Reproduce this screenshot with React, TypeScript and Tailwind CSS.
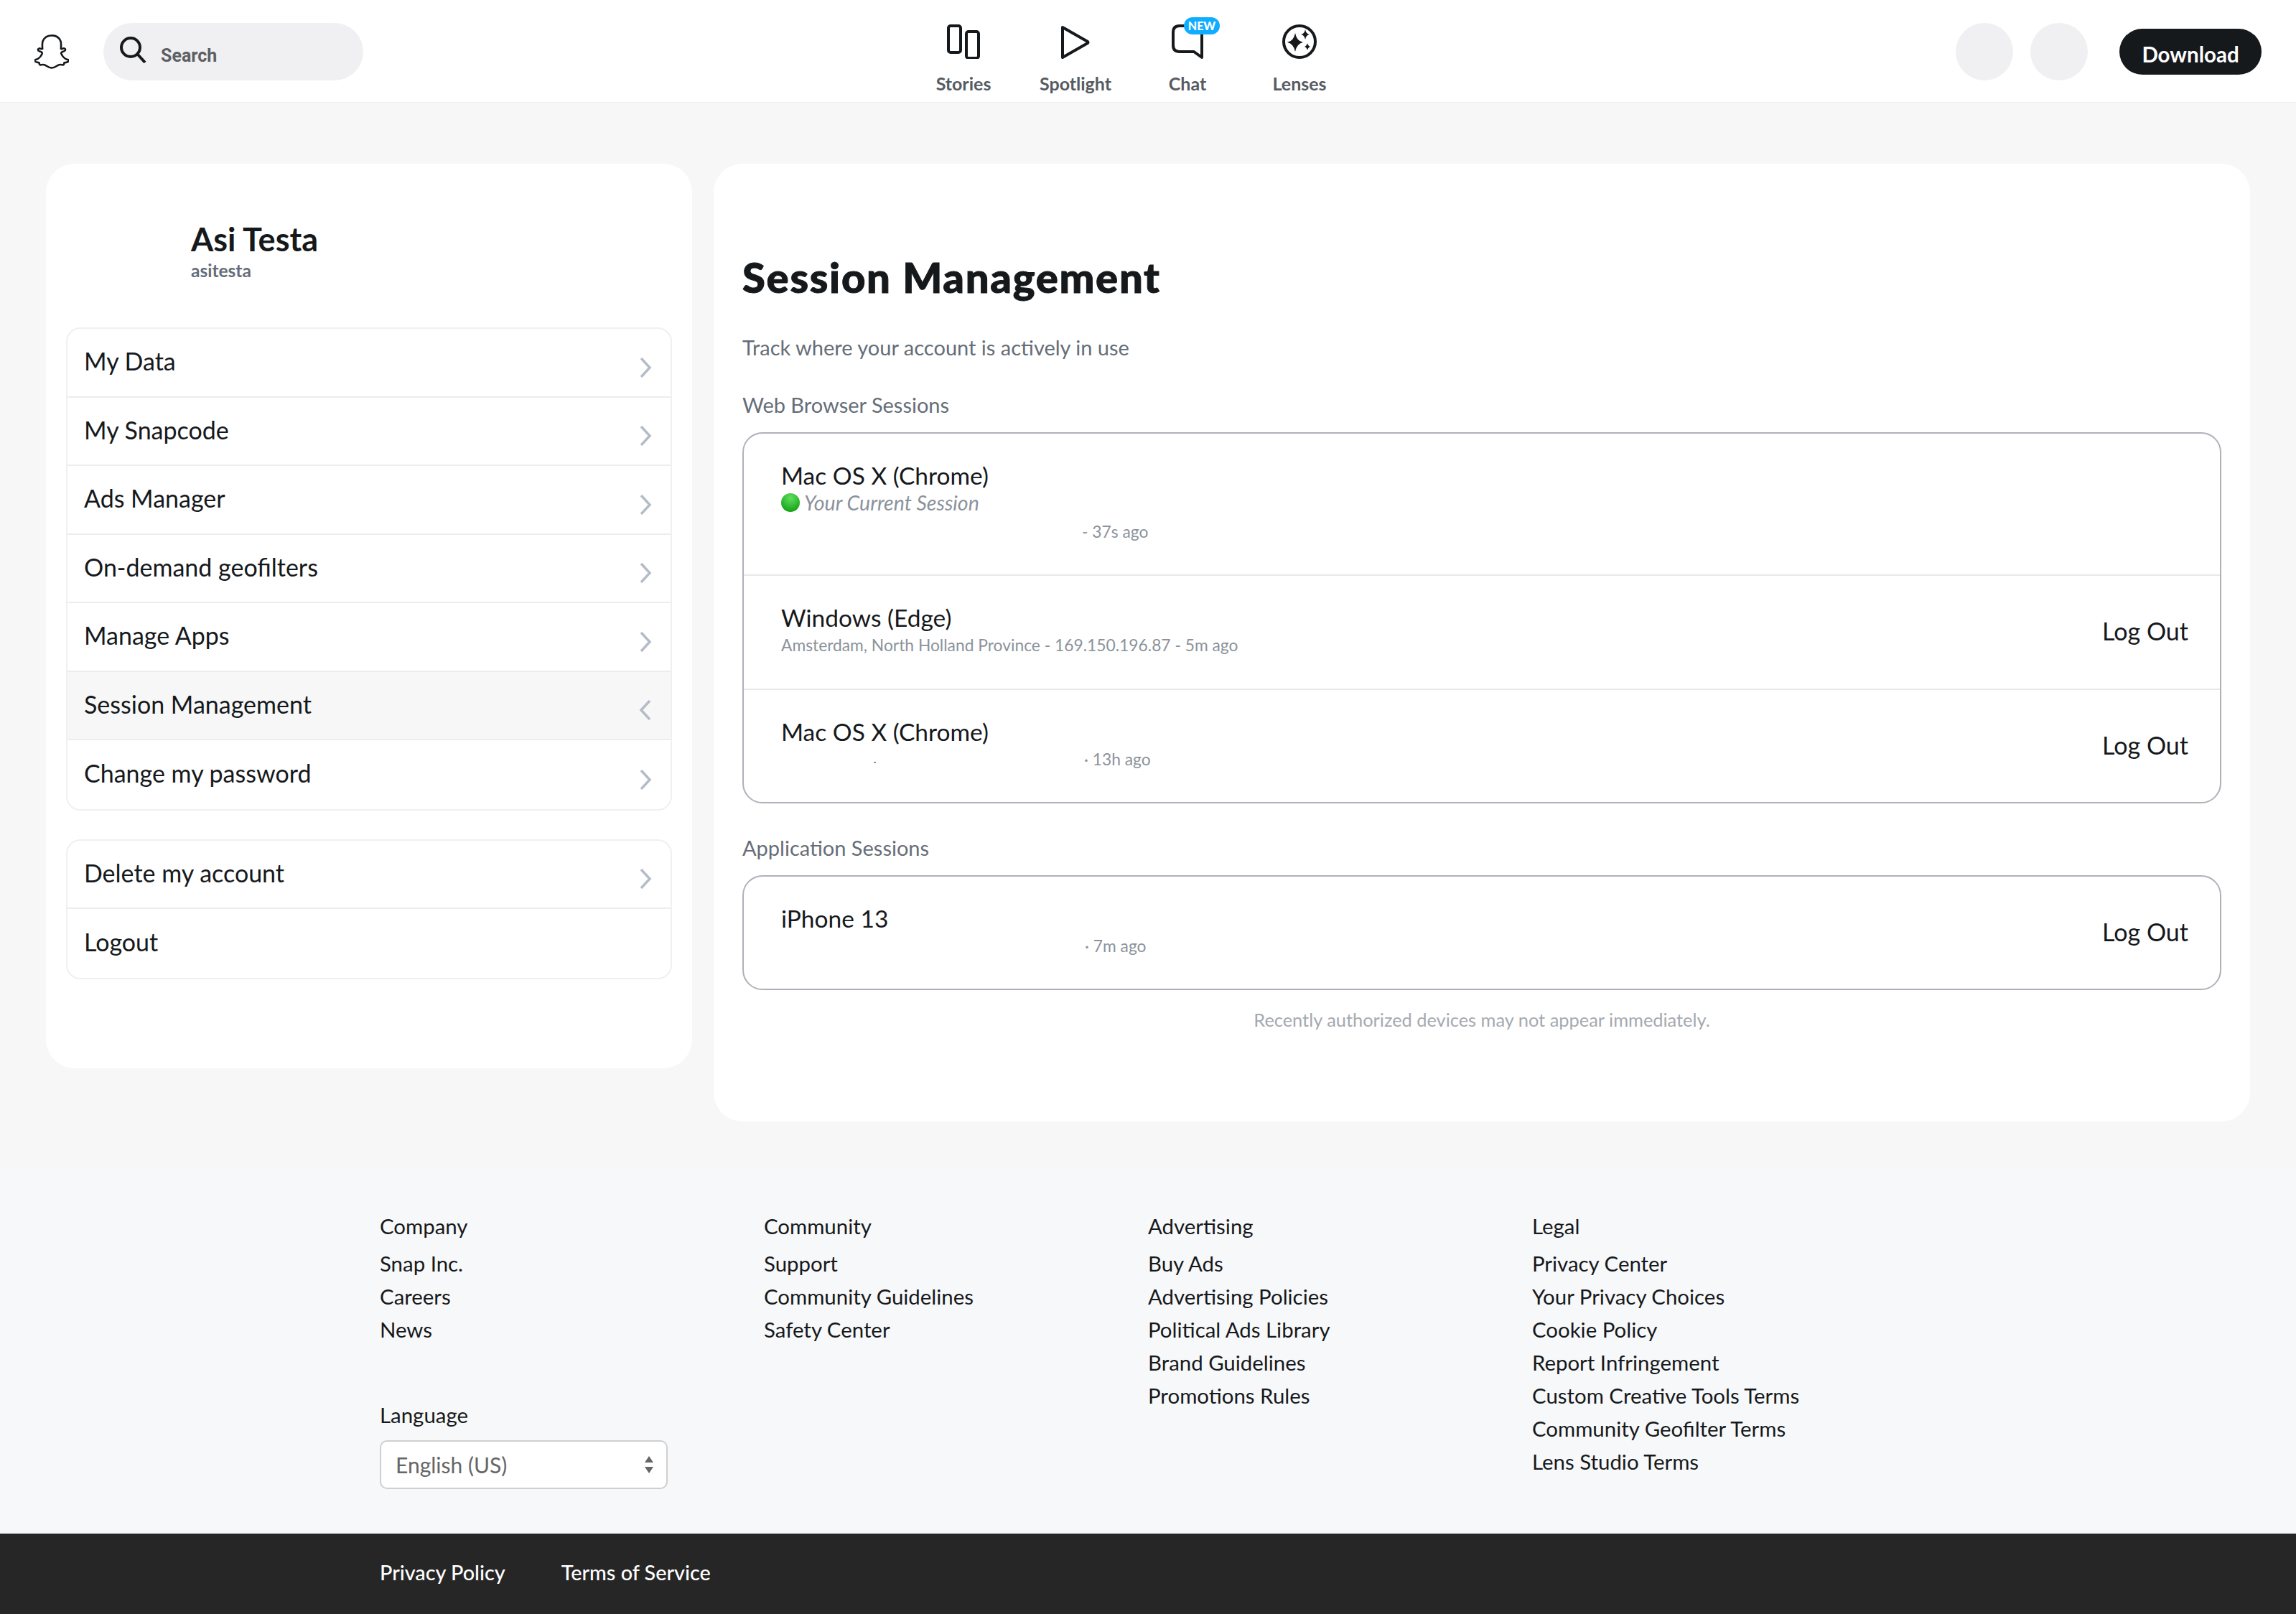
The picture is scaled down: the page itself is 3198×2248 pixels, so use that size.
import { FaSnapchatGhost } from "react-icons/fa";

const FONT = "font-['Lato','Noto_Sans',sans-serif]";

const Chevron = ({ open = false }: { open?: boolean }) => (
  <svg width="18" height="28" viewBox="0 0 18 28" className="mt-[14px]" fill="none" stroke="#b4bcc7" strokeWidth="3.5">
    {open ? <path d="M15 1 L3 14 L15 27" /> : <path d="M3 1 L15 14 L3 27" />}
  </svg>
);

const NavItem = ({ label, children }: { label: string; children: React.ReactNode }) => (
  <div className="relative flex w-[156px] flex-col items-center">
    <div className="flex h-[73px] w-[60px] items-start justify-center pt-[6px]">{children}</div>
    <span className="text-[25px] leading-[30px] font-bold text-[#565b62]">{label}</span>
  </div>
);

const Header = () => (
  <header className="flex h-[143px] items-center border-b border-[#efefef] bg-white pt-[2px]">
    <div className="flex w-[1264px] items-center">
      <FaSnapchatGhost className="ml-[48px] h-[48px] w-[48px] text-white" stroke="#16191c" strokeWidth="28" />
      <div className="ml-[48px] flex h-[80px] w-[362px] items-center rounded-full bg-[#f0f0f2] pl-[22px]">
        <svg width="38" height="38" viewBox="0 0 38 38" fill="none" stroke="#16191c" strokeWidth="4" className="-mt-[6px]">
          <circle cx="16" cy="16" r="13" />
          <path d="M26 26 L36 37" />
        </svg>
        <span className="mt-[12px] ml-[20px] font-['Roboto',sans-serif] text-[25px] font-bold text-[#5d5f64]">Search</span>
      </div>
    </div>
    <nav className="flex w-[624px] self-start pt-[26px]">
      <NavItem label="Stories">
        <svg width="48" height="48" viewBox="0 0 48 48" fill="none" stroke="#16191c" strokeWidth="4">
          <rect x="3" y="2" width="17" height="37" rx="3" />
          <rect x="28" y="10" width="17" height="37" rx="3" />
        </svg>
      </NavItem>
      <NavItem label="Spotlight">
        <svg width="42" height="48" viewBox="0 0 42 48" fill="none" stroke="#16191c" strokeWidth="4" strokeLinejoin="round">
          <path d="M3 4 L38 24 Q39 25 38 26 L3 46 Z" />
        </svg>
      </NavItem>
      <NavItem label="Chat">
        <svg width="46" height="48" viewBox="0 0 46 48" fill="none" stroke="#16191c" strokeWidth="4" strokeLinejoin="round">
          <path d="M12 2 H43 V46 L32 38 H12 Q3 38 3 29 V11 Q3 2 12 2 Z" />
        </svg>
        <span className="absolute top-[-4px] left-[73px] flex h-[24px] w-[50px] items-center justify-center rounded-full bg-[#0fadff] text-[16px] leading-none font-black text-white">
          NEW
        </span>
      </NavItem>
      <NavItem label="Lenses">
        <svg width="48" height="48" viewBox="0 0 48 48" fill="none">
          <circle cx="24" cy="24" r="22" stroke="#16191c" strokeWidth="4" />
          <path d="M18 12 Q20 23 29 25 Q20 27 18 38 Q16 27 7 25 Q16 23 18 12 Z" fill="#16191c" />
          <path d="M32 7 Q33 13 38 14 Q33 15 32 21 Q31 15 26 14 Q31 13 32 7 Z" fill="#16191c" />
          <path d="M35 26 Q36 30 39 31 Q36 32 35 36 Q34 32 31 31 Q34 30 35 26 Z" fill="#16191c" />
        </svg>
      </NavItem>
    </nav>
    <div className="flex flex-1 items-center justify-end pr-[48px]">
      <div className="h-[80px] w-[80px] rounded-full bg-[#f0f0f2]" />
      <div className="ml-[24px] h-[80px] w-[80px] rounded-full bg-[#f0f0f2]" />
      <button className="ml-[44px] h-[64px] w-[198px] rounded-full bg-[#16191c] pt-[8px] text-[29.5px] leading-none font-bold text-white">Download</button>
    </div>
  </header>
);

const MenuRow = ({ label, active, chevron = true, last }: { label: string; active?: boolean; chevron?: boolean; last?: boolean }) => (
  <div
    className={`flex h-[95.5px] items-center justify-between pr-[26px] pl-[23px] text-[34px] text-[#16191c] ${
      active ? "bg-[#f7f7f7]" : ""
    } ${last ? "" : "border-b-2 border-[#ededed]"}`}
  >
    <span className="-mt-[4px]">{label}</span>
    {chevron && <Chevron open={active} />}
  </div>
);

const Sidebar = () => (
  <aside className="h-[1260px] w-[900px] rounded-[40px] bg-white px-[28px]">
    <div className="h-[228px] pt-[79px] pl-[174px]">
      <div className="text-[45px] leading-[52px] font-bold text-[#16191c]">Asi Testa</div>
      <div className="mt-[1px] text-[24.5px] leading-[34px] font-bold text-[#656d78]">asitesta</div>
    </div>
    <div className="overflow-hidden rounded-[20px] border-2 border-[#f0f0f0]">
      <MenuRow label="My Data" />
      <MenuRow label="My Snapcode" />
      <MenuRow label="Ads Manager" />
      <MenuRow label="On-demand geofilters" />
      <MenuRow label="Manage Apps" />
      <MenuRow label="Session Management" active />
      <MenuRow label="Change my password" last />
    </div>
    <div className="mt-[40px] overflow-hidden rounded-[20px] border-2 border-[#f0f0f0]">
      <MenuRow label="Delete my account" />
      <MenuRow label="Logout" chevron={false} last />
    </div>
  </aside>
);

const Session = ({
  name,
  meta,
  metaLeft,
  speck,
  logout = true,
  height,
  current,
  last,
}: {
  name: string;
  meta: string;
  metaLeft?: number;
  speck?: boolean;
  logout?: boolean;
  height: string;
  current?: boolean;
  last?: boolean;
}) => (
  <div className={`flex items-start justify-between pr-[44px] pl-[52px] ${height} ${last ? "" : "border-b-2 border-[#e8e8e8]"}`}>
    <div className="pt-[38px]">
      <div className="text-[33.5px] leading-[40px] text-[#16191c]">{name}</div>
      {current && (
        <div className="flex h-[40px] items-center">
          <span className="-mt-[4px] h-[26px] w-[26px] rounded-full bg-[radial-gradient(circle_at_50%_25%,#5fe05f,#069406)]" />
          <span className="-mt-[4px] ml-[6px] text-[28.5px] text-[#8b929b] italic">Your Current Session</span>
        </div>
      )}
      <div className="relative flex h-[36px] items-center text-[22.8px] text-[#8b929b]">
        {metaLeft ? <span className="w-0" style={{ marginLeft: metaLeft }} /> : null}
        <span>{meta}</span>
        {speck && <span className="absolute top-[22px] left-[129px] h-[2px] w-[3px] bg-[#8b929b]" />}
      </div>
    </div>
    {logout && <button className="mt-[57px] text-[34px] leading-[40px] text-[#16191c]">Log Out</button>}
  </div>
);

const SessionCard = () => (
  <section className="h-[1334px] flex-1 rounded-[40px] bg-white px-[40px]">
    <h1 className="pt-[126px] text-[58px] leading-[64px] font-black tracking-[1.7px] text-[#16191c] [-webkit-text-stroke:1px_#16191c]">
      Session Management
    </h1>
    <p className="mt-[48px] text-[29px] leading-[36px] text-[#656d78]">Track where your account is actively in use</p>
    <h2 className="mt-[44px] text-[29px] leading-[36px] text-[#656d78]">Web Browser Sessions</h2>
    <div className="mt-[20px] overflow-hidden rounded-[28px] border-2 border-[#aeb2b8]">
      <Session name="Mac OS X (Chrome)" meta="- 37s ago" metaLeft={419} height="h-[198px]" current logout={false} />
      <Session name="Windows (Edge)" meta="Amsterdam, North Holland Province - 169.150.196.87 - 5m ago" height="h-[159px]" />
      <Session name="Mac OS X (Chrome)" meta="· 13h ago" metaLeft={422} speck height="h-[156px]" last />
    </div>
    <h2 className="mt-[44px] text-[29px] leading-[36px] text-[#656d78]">Application Sessions</h2>
    <div className="mt-[20px] overflow-hidden rounded-[28px] border-2 border-[#aeb2b8]">
      <Session name="iPhone 13" meta="· 7m ago" metaLeft={423} height="h-[156px]" last />
    </div>
    <p className="mt-[23px] text-center text-[25.4px] leading-[36px] text-[#a5a9af]">Recently authorized devices may not appear immediately.</p>
  </section>
);

const FooterColumn = ({ title, links }: { title: string; links: string[] }) => (
  <div>
    <div className="text-[29.4px] leading-[46px]">{title}</div>
    <ul className="mt-[6px]">
      {links.map((link) => (
        <li key={link} className="text-[29.4px] leading-[46px]">
          {link}
        </li>
      ))}
    </ul>
  </div>
);

const Footer = () => (
  <footer className="h-[510px] bg-[#f7f8f9] pt-[59px] pl-[529px] text-[#16191c]">
    <div className="grid grid-cols-[535px_535px_535px_535px]">
      <div>
        <FooterColumn title="Company" links={["Snap Inc.", "Careers", "News"]} />
        <div className="mt-[73px] text-[29.4px] leading-[46px]">Language</div>
        <div className="mt-[12px] flex h-[68px] w-[401px] items-center justify-between rounded-[10px] border-2 border-[#cfcfcf] bg-white pr-[18px] pl-[20px] text-[30px] text-[#666]">
          English (US)
          <svg width="12" height="26" viewBox="0 0 12 26" fill="#666">
            <path d="M6 1 L12 10 H0 Z M0 16 H12 L6 25 Z" />
          </svg>
        </div>
      </div>
      <FooterColumn title="Community" links={["Support", "Community Guidelines", "Safety Center"]} />
      <FooterColumn title="Advertising" links={["Buy Ads", "Advertising Policies", "Political Ads Library", "Brand Guidelines", "Promotions Rules"]} />
      <FooterColumn
        title="Legal"
        links={[
          "Privacy Center",
          "Your Privacy Choices",
          "Cookie Policy",
          "Report Infringement",
          "Custom Creative Tools Terms",
          "Community Geofilter Terms",
          "Lens Studio Terms",
        ]}
      />
    </div>
  </footer>
);

export default function App() {
  return (
    <div className={`${FONT} h-[2248px] w-[3198px] overflow-hidden bg-[#f7f7f7]`}>
      <Header />
      <main className="flex gap-[30px] pt-[85px] pr-[64px] pb-[64px] pl-[64px]">
        <Sidebar />
        <SessionCard />
      </main>
      <Footer />
      <div className="flex h-[112px] items-center gap-[78px] bg-[#262626] pb-[2px] pl-[529px] text-[28.8px] font-medium text-white">
        <span>Privacy Policy</span>
        <span>Terms of Service</span>
      </div>
    </div>
  );
}
